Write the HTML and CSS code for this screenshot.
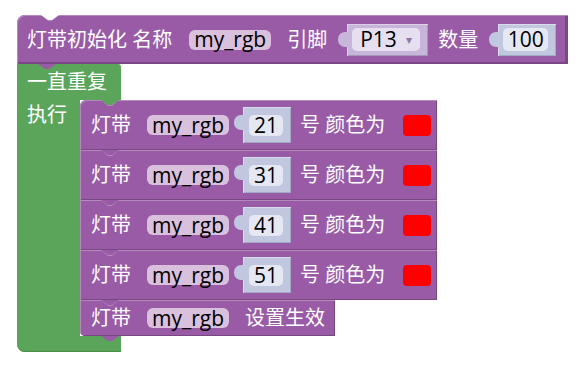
FILE: index.html
```html
<!DOCTYPE html>
<html lang="zh-CN">
<head>
  <meta charset="UTF-8" />
  <title>灯带积木</title>
  <link rel="stylesheet" href="styles.css">
</head>
<body>
  <div class="workspace">
    <div class="block init">
      <span class="label">灯带初始化 名称</span>
      <span class="pill">my_rgb</span>
      <span class="label pin-label">引脚</span>
      <span class="value dropdown"><span class="field">P13 <span class="arrow">▾</span></span></span>
      <span class="label count-label">数量</span>
      <span class="value number big"><span class="field">100</span></span>
    </div>

    <div class="loop">
      <div class="loop-head"><span class="label">一直重复</span></div>
      <div class="loop-body">
        <div class="loop-spine"><span class="label">执行</span></div>
        <div class="stack">
          <div class="block row first">
            <span class="label">灯带</span>
            <span class="pill">my_rgb</span>
            <span class="value number"><span class="field">21</span></span>
            <span class="label color-label">号 颜色为</span>
            <span class="swatch"></span>
          </div>
          <div class="block row">
            <span class="label">灯带</span>
            <span class="pill">my_rgb</span>
            <span class="value number"><span class="field">31</span></span>
            <span class="label color-label">号 颜色为</span>
            <span class="swatch"></span>
          </div>
          <div class="block row">
            <span class="label">灯带</span>
            <span class="pill">my_rgb</span>
            <span class="value number"><span class="field">41</span></span>
            <span class="label color-label">号 颜色为</span>
            <span class="swatch"></span>
          </div>
          <div class="block row">
            <span class="label">灯带</span>
            <span class="pill">my_rgb</span>
            <span class="value number"><span class="field">51</span></span>
            <span class="label color-label">号 颜色为</span>
            <span class="swatch"></span>
          </div>
          <div class="block row last">
            <span class="label">灯带</span>
            <span class="pill">my_rgb</span>
            <span class="label apply-label">设置生效</span>
          </div>
        </div>
      </div>
      <div class="loop-foot"></div>
    </div>
  </div>
</body>
</html>
```

FILE: styles.css
```css
html, body {
  margin: 0;
  padding: 0;
  background: #fff;
  font-family: 'Open Sans', 'Noto Sans CJK SC', sans-serif;
  font-size: 20px;
}

.workspace {
  padding: 15px 0 0 17px;
}

.label {
  color: #fff;
  line-height: 1;
  white-space: pre;
}

/* purple blocks */
.block {
  position: relative;
  display: flex;
  align-items: center;
  box-sizing: border-box;
  background: #995ba5;
  box-shadow: inset 1px 1px 0 #b48abd, inset -1px -1px 0 #7a4785;
}

.block::before,
.block::after {
  content: '';
  position: absolute;
  top: 0;
  left: 21px;
  width: 18px;
}

.block::before {
  height: 6px;
  background: #b48abd;
  clip-path: polygon(0 0, 7px 6px, 11px 6px, 18px 0);
}

.block::after {
  height: 5px;
  background: #995ba5;
  clip-path: polygon(0 0, 7px 5px, 11px 5px, 18px 0);
}

.init {
  width: 551px;
  height: 49px;
  padding-left: 10px;
  border-radius: 8px 0 0 0;
  box-shadow: inset 1px 1px 0 #b48abd, inset -3px -2px 0 #7a4785;
}

.init::before,
.init::after {
  left: 24px;
}

.init::after {
  background: #fff;
}

.init .pill {
  margin-left: 17px;
}

.pin-label {
  margin-left: 16px;
}

.dropdown {
  margin-left: 20px;
}

.count-label {
  margin-left: 10px;
}

.init .number {
  margin-left: 20px;
}

.row {
  width: 357px;
  height: 50px;
  padding-left: 11px;
}

.row.first {
  border-radius: 6px 0 0 0;
}

.row.first::after {
  background: #5ba55b;
}

.row.last {
  width: 255px;
  height: 36px;
  border-radius: 0 0 0 5px;
}

.row .pill {
  margin-left: 16px;
}

.row .number {
  margin-left: 14px;
}

.color-label {
  margin-left: 9px;
}

.apply-label {
  margin-left: 16px;
}

/* fields */
.pill {
  display: inline-flex;
  align-items: center;
  justify-content: center;
  width: 82px;
  height: 20px;
  border-radius: 6px;
  background: #d9c1de;
  color: #000;
  font-size: 21px;
  line-height: 1;
}

.value {
  position: relative;
  display: inline-flex;
  align-items: center;
  box-sizing: border-box;
}

.value::before {
  content: '';
  position: absolute;
  left: -9px;
  top: 8px;
  width: 10px;
  height: 15px;
  border-radius: 7px 0 0 7px;
  background: inherit;
}

.dropdown {
  width: 81px;
  height: 32px;
  padding-left: 5px;
  background: #c7b6d9;
  box-shadow: inset 1px 1px 0 #ddd0e8, inset -1px -1px 0 #a895bd;
}

.number {
  width: 48px;
  height: 36px;
  padding-left: 6px;
  background: #c1c7df;
  box-shadow: inset 1px 1px 0 #d8dcec, inset -1px -1px 0 #a2a9c4;
}

.number.big {
  width: 58px;
  height: 32px;
  padding-left: 5px;
}

.field {
  display: inline-flex;
  align-items: center;
  justify-content: center;
  height: 21px;
  border-radius: 5px;
  background: #e5e7f2;
  color: #000;
  font-size: 21px;
  line-height: 1;
}

.dropdown .field {
  width: 68px;
  height: 23px;
  background: #e6dff0;
  white-space: pre;
}

.number .field {
  width: 34px;
}

.number.big .field {
  width: 45px;
  height: 23px;
}

.arrow {
  font-size: 12px;
  color: #8a7aab;
  margin-left: 4px;
}

.swatch {
  width: 28px;
  height: 21px;
  margin-left: 18px;
  border-radius: 4px;
  background: #ff0000;
}

/* green loop */
.loop {
  position: relative;
  width: 104px;
}

.loop::after {
  content: '';
  position: absolute;
  left: 21px;
  bottom: -5px;
  width: 18px;
  height: 5px;
  background: #5ba55b;
  clip-path: polygon(0 0, 18px 0, 11px 5px, 7px 5px);
}

.loop-head {
  position: relative;
  display: flex;
  align-items: center;
  height: 36px;
  padding-left: 10px;
  background: #5ba55b;
  border-radius: 0 3px 0 0;
}

.loop-head::before,
.loop-foot::before {
  content: '';
  position: absolute;
  top: 0;
  width: 18px;
  height: 5px;
  background: #995ba5;
  clip-path: polygon(0 0, 18px 0, 11px 5px, 7px 5px);
}

.loop-head::before {
  left: 21px;
}

.loop-body {
  display: flex;
}

.loop-spine {
  flex: none;
  width: 53px;
  padding: 0 0 0 10px;
  background: #5ba55b;
}

.loop-spine .label {
  display: block;
  line-height: 30px;
}

.stack {
  display: flex;
  flex-direction: column;
}

.loop-foot {
  position: relative;
  height: 16px;
  background: #5ba55b;
  border-radius: 0 0 0 8px;
  box-shadow: inset 0 -1px 0 #4b8c4b;
}

.loop-foot::before {
  left: 84px;
}
```
